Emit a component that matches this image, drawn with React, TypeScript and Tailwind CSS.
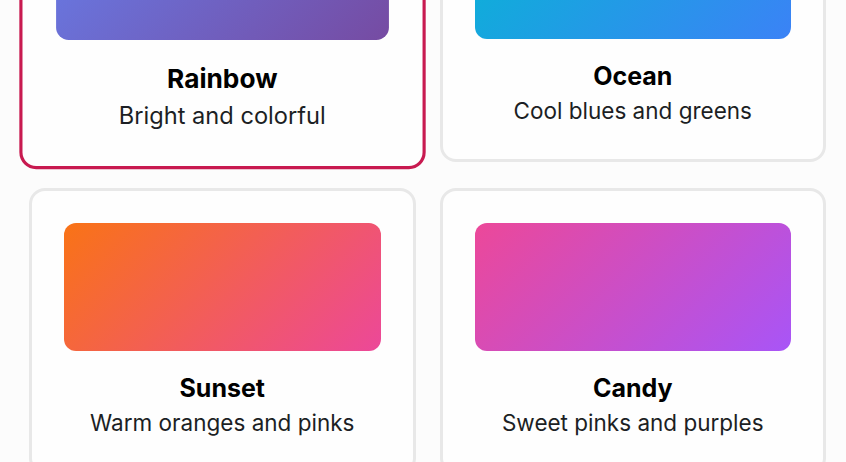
import React from "react";

type Theme = { name: string; desc: string; grad: string; selected?: boolean };

const themes: Theme[] = [
  { name: "Rainbow", desc: "Bright and colorful", grad: "bg-[linear-gradient(135deg,#667eea,#764ba2)]", selected: true },
  { name: "Ocean", desc: "Cool blues and greens", grad: "bg-[linear-gradient(135deg,#06b6d4,#3b82f6)]" },
  { name: "Sunset", desc: "Warm oranges and pinks", grad: "bg-[linear-gradient(135deg,#f97316,#ec4899)]" },
  { name: "Candy", desc: "Sweet pinks and purples", grad: "bg-[linear-gradient(135deg,#ec4899,#a855f7)]" },
];

export default function App() {
  return (
    <div
      className="w-[846px] h-[462px] overflow-hidden bg-[#fcfcfc]"
      style={{ fontFamily: "Inter, 'Noto Sans', sans-serif" }}
    >
      <div className="mt-[-124px] pl-[29px] pr-[20px] grid grid-cols-2 gap-x-6 gap-y-[26px]">
        {themes.map((t) => (
          <div
            key={t.name}
            className={
              t.selected
                ? "relative z-10 scale-105 rounded-2xl border-[3px] border-[#c81a50] bg-[#fefefe] px-8 pt-8 pb-[33px] text-center"
                : "rounded-2xl border-[3px] border-[#e8e8e8] bg-[#fefefe] px-8 pt-8 pb-[33px] text-center"
            }
          >
            <div className={`h-32 rounded-xl ${t.grad}`} />
            <div className="mt-[21px] h-8 text-[25px] leading-8 font-bold text-black">{t.name}</div>
            <div className="mt-[4px] h-[30px] text-[22.5px] leading-[30px] text-[#1c1f24]">{t.desc}</div>
          </div>
        ))}
      </div>
    </div>
  );
}
